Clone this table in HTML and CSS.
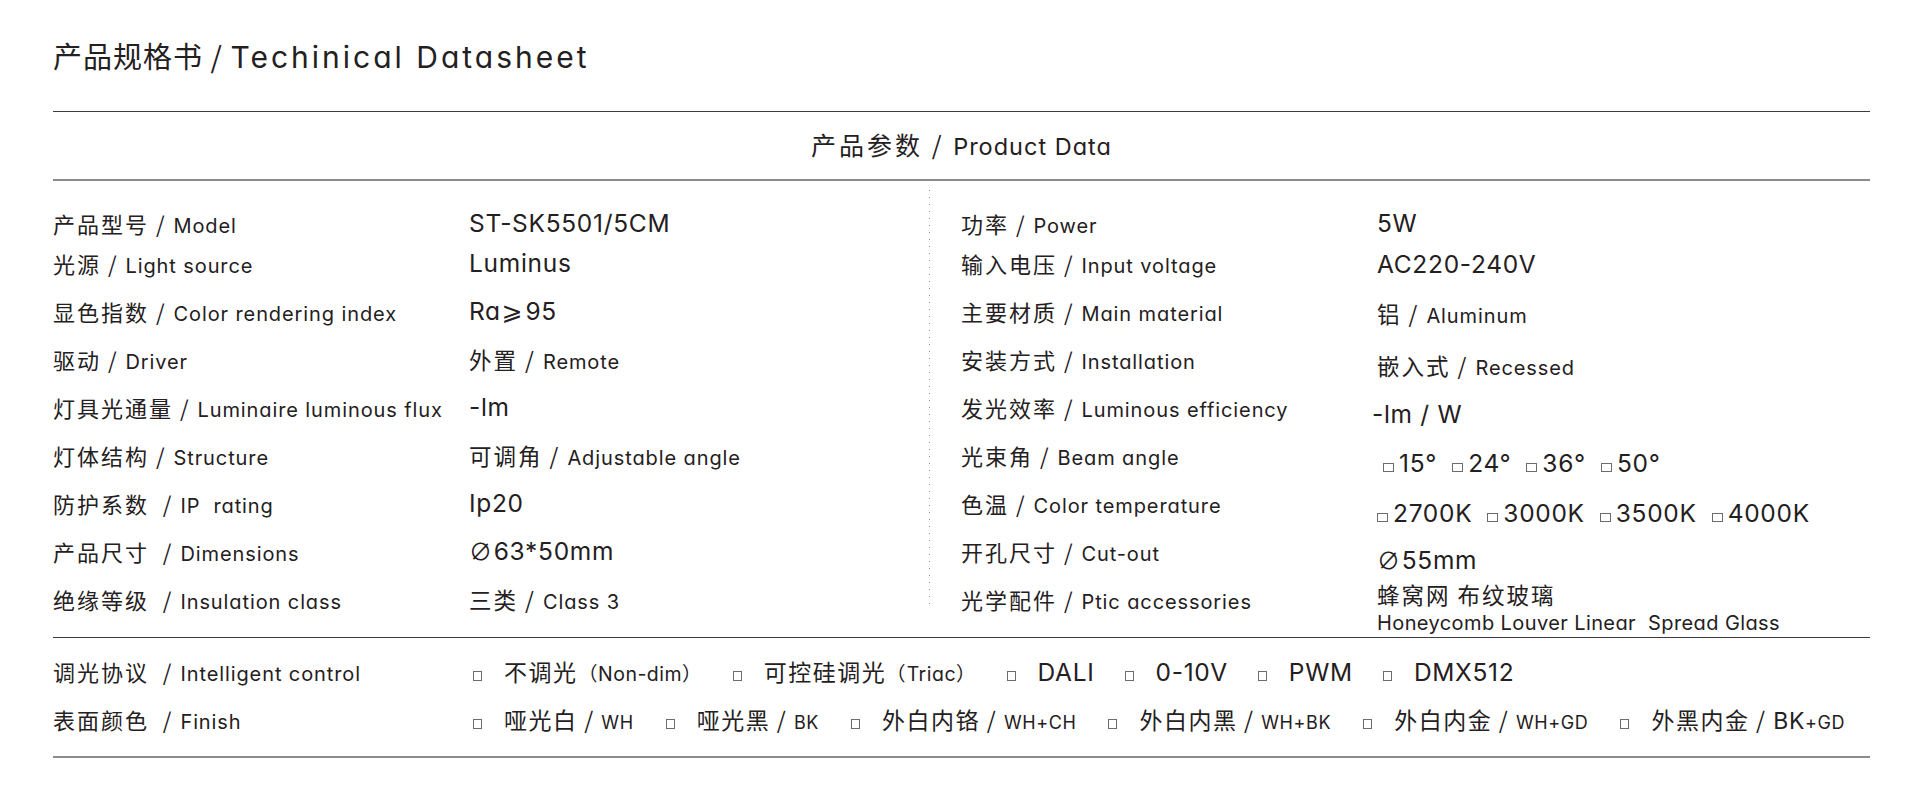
FILE: index.html
```html
<!DOCTYPE html>
<html lang="zh-CN">
<head>
<meta charset="utf-8">
<title>产品规格书 / Techinical Datasheet</title>
<link rel="stylesheet" href="styles.css">
</head>
<body>
<main class="sheet">
  <h1 class="title"><span class="t-zh">产品规格书 / </span><span class="t-en">Techinical Datasheet</span></h1>
  <hr class="rule rule-dark rule-top">
  <h2 class="section-head"><span class="zh">产品参数 / </span><span class="en">Product Data</span></h2>
  <hr class="rule rule-grey">

  <section class="specs">
    <div class="half half-left">
      <div class="col labels">
        <div class="cell h40"><span class="zh">产品型号 / </span><span class="en">Model</span></div>
        <div class="cell h44"><span class="zh">光源 / </span><span class="en">Light source</span></div>
        <div class="cell"><span class="zh">显色指数 / </span><span class="en">Color rendering index</span></div>
        <div class="cell"><span class="zh">驱动 / </span><span class="en">Driver</span></div>
        <div class="cell"><span class="zh">灯具光通量 / </span><span class="en">Luminaire luminous flux</span></div>
        <div class="cell"><span class="zh">灯体结构 / </span><span class="en">Structure</span></div>
        <div class="cell"><span class="zh">防护系数 &nbsp;/ </span><span class="en">IP&nbsp; rating</span></div>
        <div class="cell"><span class="zh">产品尺寸 &nbsp;/ </span><span class="en">Dimensions</span></div>
        <div class="cell"><span class="zh">绝缘等级 &nbsp;/ </span><span class="en">Insulation class</span></div>
      </div>
      <div class="col values">
        <div class="cell h40"><span class="val">ST-SK5501/5CM</span></div>
        <div class="cell h44"><span class="val">Luminus</span></div>
        <div class="cell"><span class="val">Ra<span class="geq">⩾</span>95</span></div>
        <div class="cell"><span class="zh">外置 / </span><span class="en">Remote</span></div>
        <div class="cell"><span class="val">-lm</span></div>
        <div class="cell"><span class="zh">可调角 / </span><span class="en">Adjustable angle</span></div>
        <div class="cell"><span class="val">Ip20</span></div>
        <div class="cell"><span class="val"><span class="dia">∅</span>63*50mm</span></div>
        <div class="cell"><span class="zh">三类 / </span><span class="en">Class 3</span></div>
      </div>
    </div>

    <div class="half half-right">
      <div class="col labels">
        <div class="cell h40"><span class="zh">功率 / </span><span class="en">Power</span></div>
        <div class="cell h44"><span class="zh">输入电压 / </span><span class="en">Input voltage</span></div>
        <div class="cell"><span class="zh">主要材质 / </span><span class="en">Main material</span></div>
        <div class="cell"><span class="zh">安装方式 / </span><span class="en">Installation</span></div>
        <div class="cell"><span class="zh">发光效率 / </span><span class="en">Luminous efficiency</span></div>
        <div class="cell"><span class="zh">光束角 / </span><span class="en">Beam angle</span></div>
        <div class="cell"><span class="zh">色温 / </span><span class="en">Color temperature</span></div>
        <div class="cell"><span class="zh">开孔尺寸 / </span><span class="en">Cut-out</span></div>
        <div class="cell"><span class="zh">光学配件 / </span><span class="en">Ptic accessories</span></div>
      </div>
      <div class="col values">
        <div class="cell h40"><span class="val">5W</span></div>
        <div class="cell h42"><span class="val">AC220-240V</span></div>
        <div class="cell h56"><span class="zh">铝 / </span><span class="en">Aluminum</span></div>
        <div class="cell h48"><span class="zh">嵌入式 / </span><span class="en">Recessed</span></div>
        <div class="cell h50 shift-l"><span class="val">-lm / W</span></div>
        <div class="cell h48 shift-r"><span class="pick"><span class="box"></span><span class="val">15°</span></span><span class="pick"><span class="box"></span><span class="val">24°</span></span><span class="pick"><span class="box"></span><span class="val">36°</span></span><span class="pick"><span class="box"></span><span class="val">50°</span></span></div>
        <div class="cell h52"><span class="pick"><span class="box"></span><span class="val">2700K</span></span><span class="pick"><span class="box"></span><span class="val">3000K</span></span><span class="pick"><span class="box"></span><span class="val">3500K</span></span><span class="pick"><span class="box"></span><span class="val">4000K</span></span></div>
        <div class="cell h42"><span class="val"><span class="dia">∅</span>55mm</span></div>
        <div class="cell h26"><span class="zh">蜂窝网 布纹玻璃</span></div>
        <div class="cell h28"><span class="en en-note">Honeycomb Louver Linear&nbsp; Spread Glass</span></div>
      </div>
    </div>
  </section>

  <hr class="rule rule-dark">

  <section class="options">
    <div class="opt-row">
      <div class="opt-label"><span class="zh">调光协议 &nbsp;/ </span><span class="en">Intelligent control</span></div>
      <div class="choices choices-tight">
        <span class="choice"><span class="cb"></span><span class="zh">不调光</span><span class="en en-c">（Non-dim）</span></span>
        <span class="choice"><span class="cb"></span><span class="zh">可控硅调光</span><span class="en en-c">（Triac）</span></span>
        <span class="choice"><span class="cb"></span><span class="val">DALI</span></span>
        <span class="choice"><span class="cb"></span><span class="val">0-10V</span></span>
        <span class="choice"><span class="cb"></span><span class="val">PWM</span></span>
        <span class="choice"><span class="cb"></span><span class="val">DMX512</span></span>
      </div>
    </div>
    <div class="opt-row">
      <div class="opt-label"><span class="zh">表面颜色 &nbsp;/ </span><span class="en">Finish</span></div>
      <div class="choices">
        <span class="choice"><span class="cb"></span><span class="zh">哑光白 / </span><span class="en en-s">WH</span></span>
        <span class="choice"><span class="cb"></span><span class="zh">哑光黑 / </span><span class="en en-s">BK</span></span>
        <span class="choice"><span class="cb"></span><span class="zh">外白内铬 / </span><span class="en en-s">WH+CH</span></span>
        <span class="choice"><span class="cb"></span><span class="zh">外白内黑 / </span><span class="en en-s">WH+BK</span></span>
        <span class="choice"><span class="cb"></span><span class="zh">外白内金 / </span><span class="en en-s">WH+GD</span></span>
        <span class="choice"><span class="cb"></span><span class="zh">外黑内金 / </span><span class="en en-m">BK</span><span class="en en-s">+GD</span></span>
      </div>
    </div>
  </section>

  <hr class="rule rule-grey">
</main>
</body>
</html>
```

FILE: styles.css
```css
* {
  box-sizing: border-box;
  margin: 0;
  padding: 0;
}

html,
body {
  background: #ffffff;
}

body {
  font-family: "Inter", "Noto Sans CJK SC", sans-serif;
  color: #242021;
  font-feature-settings: "cv11";
}

.sheet {
  padding: 0 54px 0 53px;
}

.zh {
  font-family: "Noto Sans CJK SC", sans-serif;
  font-size: 22px;
  letter-spacing: 2px;
  white-space: pre;
}

.en {
  font-family: "Inter", sans-serif;
  font-size: 20px;
  letter-spacing: 0.9px;
}

.val {
  font-family: "Inter", "DejaVu Sans", sans-serif;
  font-size: 24.5px;
  letter-spacing: 0.7px;
}

.geq {
  font-family: "DejaVu Sans", sans-serif;
  font-size: 25px;
  margin: 0 2px 0 1px;
}

.dia {
  font-family: "DejaVu Sans", sans-serif;
  font-size: 23px;
  font-weight: 300;
  margin-right: 1px;
}

/* Title */
.title {
  font-weight: 400;
  height: 42px;
  line-height: 40px;
  margin-top: 35px;
  white-space: nowrap;
}

.t-zh {
  font-family: "Noto Sans CJK SC", sans-serif;
  font-size: 29px;
  letter-spacing: 1px;
  white-space: pre;
}

.t-en {
  font-family: "Inter", sans-serif;
  font-size: 30px;
  letter-spacing: 3px;
}

.rule {
  display: block;
  border: 0;
  height: 0;
}

.rule-dark {
  border-top: 1px solid #3f3b3c;
}

.rule-top {
  margin-top: 34px;
}

.rule-grey {
  border-top: 2px solid #8d8b8b;
}

/* Section header */
.section-head {
  height: 67px;
  line-height: 64px;
  text-align: center;
  font-weight: 400;
  white-space: nowrap;
  overflow: hidden;
}

.section-head .zh {
  font-size: 25px;
  letter-spacing: 3px;
}

.section-head .en {
  font-size: 23.5px;
  letter-spacing: 1px;
}

/* Spec table */
.specs {
  display: grid;
  grid-template-columns: 876px 1fr;
  align-items: start;
}

.half {
  display: grid;
  grid-template-columns: 416px 1fr;
  padding-top: 22px;
}

.half-right {
  padding-left: 32px;
  background-image: repeating-linear-gradient(to bottom, #8f8f8f 0 1px, transparent 1px 7px);
  background-repeat: no-repeat;
  background-size: 1px 420px;
  background-position: 0 9px;
}

.col {
  display: flex;
  flex-direction: column;
}

.cell {
  height: 48px;
  line-height: 48px;
  white-space: nowrap;
}

.h26 { height: 26px; line-height: 26px; }
.h28 { height: 28px; line-height: 28px; }
.h40 { height: 40px; line-height: 40px; }
.h42 { height: 42px; line-height: 42px; }
.h44 { height: 44px; line-height: 40px; padding-bottom: 4px; }
.h48 { height: 48px; line-height: 48px; }
.h50 { height: 50px; line-height: 50px; }
.h52 { height: 52px; line-height: 52px; }
.h56 { height: 56px; line-height: 56px; }

.values .h28 {
  margin-top: 2px;
}

.shift-l {
  margin-left: -5px;
}

.shift-r {
  margin-left: 6px;
}

.values .zh {
  font-size: 22.5px;
}

.values .en {
  font-size: 20px;
}

.en-note {
  font-size: 19px;
  letter-spacing: 0.4px;
}

.pick {
  display: inline-flex;
  align-items: baseline;
  margin-right: 15px;
}

.pick .box,
.choice .cb {
  display: inline-block;
  border: 1px solid #6e6b6b;
}

.pick .box {
  width: 11px;
  height: 9px;
  margin-right: 5px;
}

/* Options */
.options {
  padding: 9px 0 13px;
}

.opt-row {
  display: grid;
  grid-template-columns: 420px 1fr;
  height: 48px;
  line-height: 48px;
  align-items: baseline;
}

.opt-label {
  white-space: nowrap;
}

.choices {
  display: flex;
  align-items: baseline;
  gap: 32px;
  white-space: nowrap;
}

.choices-tight {
  gap: 30px;
}

.choice {
  display: inline-flex;
  align-items: baseline;
}

.choice .cb {
  width: 9px;
  height: 10px;
  margin-right: 22px;
}

.choice .zh {
  font-size: 23px;
  letter-spacing: 1.5px;
}

.choice .val {
  font-size: 24.5px;
}

.en-c {
  font-size: 19.5px;
  letter-spacing: 0.5px;
}

.en-s {
  font-size: 18px;
  letter-spacing: 0.6px;
}

.en-m {
  font-size: 23px;
  letter-spacing: 0.6px;
}
```
